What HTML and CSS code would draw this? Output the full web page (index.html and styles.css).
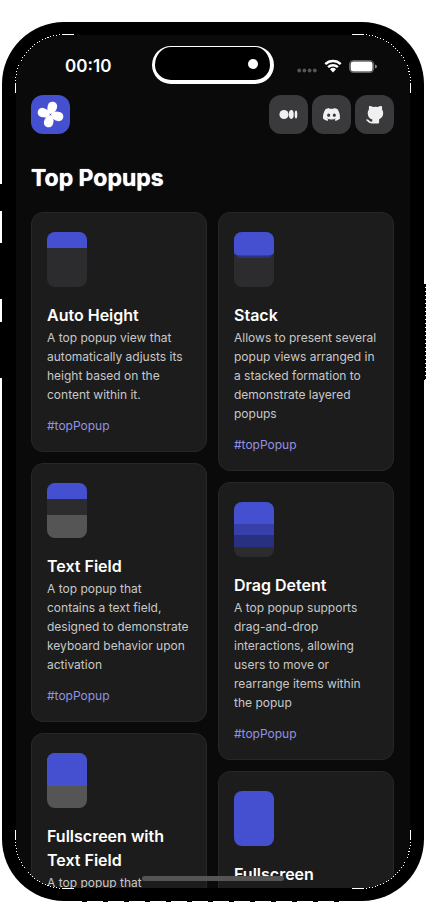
FILE: index.html
```html
<!DOCTYPE html>
<html lang="en">
<head>
<meta charset="utf-8">
<meta name="viewport" content="width=device-width, initial-scale=1">
<title>Top Popups</title>
<link rel="stylesheet" href="styles.css">
</head>
<body>
<div class="phone">
  <span class="side side-action"></span>
  <span class="side side-up"></span>
  <span class="side side-down"></span>
  <span class="side side-power"></span>
  <div class="screen">
    <div class="status">
      <time class="clock">00:10</time>
      <div class="island"><span class="camera"></span></div>
      <div class="indicators">
        <svg class="dots" viewBox="0 0 20 5" aria-hidden="true"><g fill="#555558"><circle cx="2.2" cy="2.5" r="1.9"/><circle cx="7.4" cy="2.5" r="1.9"/><circle cx="12.6" cy="2.5" r="1.9"/><circle cx="17.8" cy="2.5" r="1.9"/></g></svg>
        <svg class="wifi" viewBox="0 0 18 14" aria-hidden="true"><g fill="none" stroke="#fff" stroke-width="2.4"><path d="M1.3 5.2A11 11 0 0 1 16.7 5.2"/><path d="M4.1 8.2A7 7 0 0 1 13.9 8.2"/></g><path d="M6 10.2a4.4 4.4 0 0 1 6 0L9 13.4z" fill="#fff"/></svg>
        <svg class="battery" viewBox="0 0 29 13" aria-hidden="true"><rect x=".6" y=".6" width="24" height="11.8" rx="4" fill="none" stroke="#626264" stroke-width="1.2"/><rect x="1.6" y="1.5" width="22" height="10" rx="3" fill="#fff"/><path d="M26 4.5v4q2-.5 2-2t-2-2z" fill="#8a8a8c"/></svg>
      </div>
    </div>
    <header class="toolbar">
      <a class="tile brand" href="#" aria-label="Home">
        <svg class="glyph" viewBox="0 0 39 39" aria-hidden="true"><g fill="#fff" transform="rotate(13 19.5 19.5)"><path id="petal" d="M19.1 19.1C15.2 17.2 14.9 14.7 14.9 11.1A4.7 4.7 0 0 1 24.3 11.1C24.3 14.9 22.6 17.4 19.1 19.1z"/><use href="#petal" transform="rotate(90 19.5 19.5)"/><use href="#petal" transform="rotate(180 19.5 19.5)"/><use href="#petal" transform="rotate(270 19.5 19.5)"/></g></svg>
      </a>
      <nav class="links">
        <a class="tile" href="#" aria-label="Medium"><svg class="glyph" viewBox="0 0 39 39" aria-hidden="true"><g fill="#f0f0f0"><circle cx="15" cy="19.5" r="4.6"/><ellipse cx="22.3" cy="19.5" rx="2.4" ry="4.4"/><ellipse cx="27" cy="19.5" rx="1.3" ry="4.1"/></g></svg></a>
        <a class="tile" href="#" aria-label="Discord"><svg class="glyph" viewBox="0 0 39 39" aria-hidden="true"><path transform="translate(11 11) scale(.7083)" fill="#f0f0f0" d="M20.317 4.3698a19.7913 19.7913 0 0 0-4.8851-1.5152.0741.0741 0 0 0-.0785.0371c-.211.3753-.4447.8648-.6083 1.2495-1.8447-.2762-3.68-.2762-5.4868 0-.1636-.3933-.4058-.8742-.6177-1.2495a.077.077 0 0 0-.0785-.037 19.7363 19.7363 0 0 0-4.8852 1.515.0699.0699 0 0 0-.0321.0277C.5334 9.0458-.319 13.5799.0992 18.0578a.0824.0824 0 0 0 .0312.0561c2.0528 1.5076 4.0413 2.4228 5.9929 3.0294a.0777.0777 0 0 0 .0842-.0276c.4616-.6304.8731-1.2952 1.226-1.9942a.076.076 0 0 0-.0416-.1057c-.6528-.2476-1.2743-.5495-1.8722-.8923a.077.077 0 0 1-.0076-.1277l.3718-.2914a.0743.0743 0 0 1 .0776-.0105c3.9278 1.7933 8.18 1.7933 12.0614 0a.0739.0739 0 0 1 .0785.0095l.3727.2924a.077.077 0 0 1-.0066.1276 12.2986 12.2986 0 0 1-1.873.8914.0766.0766 0 0 0-.0407.1067c.3604.698.7719 1.3628 1.225 1.9932a.076.076 0 0 0 .0842.0286c1.961-.6067 3.9495-1.5219 6.0023-3.0294a.077.077 0 0 0 .0313-.0552c.5004-5.177-.8382-9.6739-3.5485-13.6604a.061.061 0 0 0-.0312-.0286zM8.02 15.3312c-1.1825 0-2.1569-1.0857-2.1569-2.419 0-1.3332.9555-2.4189 2.157-2.4189 1.2108 0 2.1757 1.0952 2.1568 2.419 0 1.3332-.9555 2.4189-2.1569 2.4189zm7.9748 0c-1.1825 0-2.1569-1.0857-2.1569-2.419 0-1.3332.9554-2.4189 2.1569-2.4189 1.2108 0 2.1757 1.0952 2.1568 2.419 0 1.3332-.946 2.4189-2.1568 2.4189z"/></svg></a>
        <a class="tile" href="#" aria-label="GitHub"><svg class="glyph" viewBox="0 0 39 39" aria-hidden="true"><path fill="#f0f0f0" d="M14.2 11Q15.8 10.5 18 12Q20.3 11.5 22.8 12Q25 10.5 26.7 11Q27.5 12.8 27 14.6Q28.4 16.3 28.2 18.5Q27.9 22.8 24.1 24.2L24.1 27.6Q24 28.6 23 28.6L17 28.6Q14 28.6 12.9 26.8Q12.4 26 11.5 25.5Q10.9 25 11.4 24.4Q13.3 24.1 14.6 26Q15.5 27 17.2 26.5L17.4 24.5Q13.1 23.4 12.7 18.5Q12.5 16.3 14 14.6Q13.5 12.8 14.2 11z"/></svg></a>
      </nav>
    </header>
    <main>
      <h1 class="heading">Top Popups</h1>
      <div class="columns">
        <div class="column">
          <article class="card">
            <svg class="swatch" viewBox="0 0 40 55" aria-hidden="true"><path fill="#2c2c2e" d="M0 0h40v55H0z"/><path fill="#4450d0" d="M0 0h40v16H0z"/></svg>
            <h2>Auto Height</h2>
            <p>A top popup view that automatically adjusts its height based on the content within it.</p>
            <a href="#" class="tag">#topPopup</a>
          </article>
          <article class="card">
            <svg class="swatch" viewBox="0 0 40 55" aria-hidden="true"><path fill="#2c2c2e" d="M0 0h40v55H0z"/><path fill="#4450d0" d="M0 0h40v16H0z"/><path fill="#555" d="M0 32h40v23H0z"/></svg>
            <h2>Text Field</h2>
            <p>A top popup that contains a text field, designed to demonstrate keyboard behavior upon activation</p>
            <a href="#" class="tag">#topPopup</a>
          </article>
          <article class="card">
            <svg class="swatch" viewBox="0 0 40 55" aria-hidden="true"><path fill="#555" d="M0 0h40v55H0z"/><path fill="#4450d0" d="M0 0h40v33H0z"/></svg>
            <h2>Fullscreen with Text Field</h2>
            <p>A top popup that</p>
          </article>
        </div>
        <div class="column">
          <article class="card">
            <svg class="swatch" viewBox="0 0 40 55" aria-hidden="true"><path fill="#2c2c2e" d="M0 0h40v55H0z"/><path fill="#2b3187" d="M2 20h36v3q-1 3-4 3H6q-3 0-4-3z"/><path fill="#363fa8" d="M1 20h38v1q-2 3-5 3H6q-3 0-5-3z"/><path fill="#4450d0" d="M0 0h40v21q-1 2-4 2H4q-3 0-4-2z"/></svg>
            <h2>Stack</h2>
            <p>Allows to present several popup views arranged in a stacked formation to demonstrate layered popups</p>
            <a href="#" class="tag">#topPopup</a>
          </article>
          <article class="card">
            <svg class="swatch" viewBox="0 0 40 55" aria-hidden="true"><path fill="#2c2c2e" d="M0 0h40v55H0z"/><path fill="#293080" d="M0 33h40v12H0z"/><path fill="#3740a9" d="M0 22h40v11H0z"/><path fill="#4450d0" d="M0 0h40v22H0z"/></svg>
            <h2>Drag Detent</h2>
            <p>A top popup supports drag-and-drop interactions, allowing users to move or rearrange items within the popup</p>
            <a href="#" class="tag">#topPopup</a>
          </article>
          <article class="card">
            <svg class="swatch" viewBox="0 0 40 55" aria-hidden="true"><path fill="#4450d0" d="M0 0h40v55H0z"/></svg>
            <h2>Fullscreen</h2>
          </article>
        </div>
      </div>
    </main>
    <span class="home-bar"></span>
  </div>
  <svg class="rim rim-tl" viewBox="0 0 60 60" aria-hidden="true"><g id="arc" fill="none" stroke="#fff" shape-rendering="crispEdges"><path d="M.5 59V50M48 .5h11"/><path d="M.5 50A49 49 0 0 1 48 .5" stroke-dasharray="1 2"/></g></svg>
  <svg class="rim rim-tr" viewBox="0 0 60 60" aria-hidden="true"><use href="#arc"/></svg>
  <svg class="rim rim-bl" viewBox="0 0 60 60" aria-hidden="true"><use href="#arc"/></svg>
  <svg class="rim rim-br" viewBox="0 0 60 60" aria-hidden="true"><use href="#arc"/></svg>
  <span class="foot"></span>
</div>
</body>
</html>
```
FILE: styles.css
```css
* { box-sizing: border-box; }
body {
  margin: 0;
  height: 100vh;
  padding: 22px 2px;
  background: #fff;
  color: #fff;
  font-family: Inter, "Liberation Sans", sans-serif;
  overflow: hidden;
}
.phone {
  position: relative;
  height: 100%;
  padding: 13px 14px;
  background: #000;
  border-radius: 62px;
}
.side { position: absolute; left: -2px; width: 4px; background: #000; }
.side-action { top: 162px; height: 27px; }
.side-up { top: 221px; height: 56px; }
.side-down { top: 300px; height: 56px; }
.side-power {
  left: auto;
  right: -2px;
  top: 262px;
  width: 2px;
  height: 96px;
  background: linear-gradient(90deg, #000 50%, transparent 50%), repeating-linear-gradient(#000 0 3px, #fff 3px 4px);
}
.rim { position: absolute; width: 60px; height: 60px; }
.rim-tl { left: 13px; top: 12px; }
.rim-tr { right: 13px; top: 12px; transform: scaleX(-1); }
.rim-bl { left: 13px; bottom: 12px; transform: scaleY(-1); }
.rim-br { right: 13px; bottom: 12px; transform: scale(-1); }
.foot {
  position: absolute;
  left: 80px;
  right: 80px;
  bottom: -1px;
  height: 1px;
  background: repeating-linear-gradient(90deg, #000 0 5px, #fff 5px 21px);
}
.screen {
  position: relative;
  height: 100%;
  padding: 0 16px 0 15px;
  background: #0a0a0a;
  border-radius: 46px;
  overflow: hidden;
}
.status {
  display: grid;
  grid-template-columns: 1fr 122px 1fr;
  align-items: center;
  height: 60px;
}
.clock { justify-self: center; padding: 2px 6px 0 0; font-size: 17px; font-weight: 600; }
.island {
  display: flex;
  align-items: center;
  justify-content: flex-end;
  height: 38px;
  padding-right: 12px;
  background: #000;
  border: solid #fff;
  border-width: 1px 4px 4px 3px;
  border-radius: 19px;
}
.camera { width: 10px; height: 10px; border-radius: 50%; background: #fff; }
.indicators { display: flex; align-items: center; justify-content: flex-end; gap: 7px; padding: 2px 16px 0 0; }
.dots { width: 20px; height: 5px; margin-top: 8px; }
.wifi { width: 18px; height: 14px; }
.battery { width: 29px; height: 13px; }
.toolbar { display: flex; justify-content: space-between; }
.links { display: flex; gap: 4px; }
.tile { display: block; width: 39px; height: 39px; border-radius: 12px; background: #3a3a3d; }
.brand { background: #4450d0; }
.glyph { display: block; width: 39px; height: 39px; }
.heading { margin: 28px 0 18px; font-size: 23px; line-height: 32px; font-weight: 700; text-shadow: 0 0 1px #fff; }
.columns { display: grid; grid-template-columns: 1fr 1fr; gap: 11px; align-items: start; }
.column { display: grid; gap: 11px; }
.card {
  padding: 19px 15px 16px;
  background: #1c1c1c;
  border: 1px solid #272728;
  border-radius: 12px;
}
.swatch { display: block; width: 40px; height: 55px; border-radius: 8px; }
.card h2 { margin: 16px 0 1px; font-size: 16px; line-height: 24px; font-weight: 600; }
.card p { margin: 0 0 12px; font-size: 12px; line-height: 19px; color: #c8c8c8; }
.tag { display: block; font-size: 12px; line-height: 19px; color: #9293e4; text-decoration: none; }
.home-bar {
  position: absolute;
  left: 50%;
  bottom: 7px;
  width: 142px;
  height: 5px;
  margin-left: -71px;
  border-radius: 3px;
  background: #555;
}
```
